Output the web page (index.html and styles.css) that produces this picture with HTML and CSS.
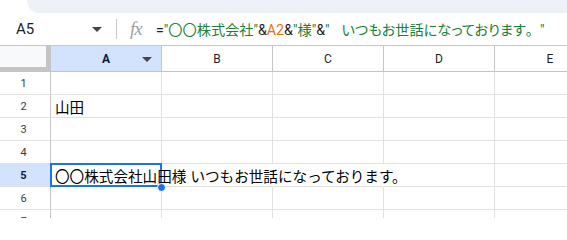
FILE: index.html
```html
<!DOCTYPE html>
<html lang="ja">
<head>
<meta charset="utf-8">
<title>Sheet</title>
<link rel="stylesheet" href="styles.css">
</head>
<body>
<div class="top"><div class="top-left"></div><div class="top-pill"></div></div>
<div class="fbar">
  <div class="namebox"><span class="name">A5</span><span class="caret"></span></div>
  <div class="sep"></div>
  <div class="fx">fx</div>
  <div class="formula"><span class="op">=</span><span class="str">"〇〇株式会社"</span><span class="op">&amp;</span><span class="ref">A2</span><span class="op">&amp;</span><span class="str">"様"</span><span class="op">&amp;</span><span class="str">"<span class="sp"> </span><span class="kana">いつもお世話になっております</span>。"</span></div>
</div>
<div class="sheet">
  <div class="corner"></div>
  <div class="ch sel">A<span class="caret small"></span></div>
  <div class="ch">B</div>
  <div class="ch">C</div>
  <div class="ch">D</div>
  <div class="ch">E</div>

  <div class="rh">1</div><div class="c"></div><div class="c"></div><div class="c"></div><div class="c"></div><div class="c"></div>
  <div class="rh">2</div><div class="c">山田</div><div class="c"></div><div class="c"></div><div class="c"></div><div class="c"></div>
  <div class="rh">3</div><div class="c"></div><div class="c"></div><div class="c"></div><div class="c"></div><div class="c"></div>
  <div class="rh">4</div><div class="c"></div><div class="c"></div><div class="c"></div><div class="c"></div><div class="c"></div>
  <div class="rh sel">5</div><div class="c active"><span class="selbox"></span><span class="val">〇〇株式会社山田様 いつもお世話になっております。</span><span class="handle"></span></div><div class="c flow"></div><div class="c flow"></div><div class="c"></div><div class="c"></div>
  <div class="rh">6</div><div class="c"></div><div class="c"></div><div class="c"></div><div class="c"></div><div class="c"></div>
  <div class="rh">7</div><div class="c"></div><div class="c"></div><div class="c"></div><div class="c"></div><div class="c"></div>
</div>
</body>
</html>
```

FILE: styles.css
```css
html, body {
  margin: 0;
  padding: 0;
  background: #fff;
  overflow: hidden;
}
body {
  width: 567px;
  height: 218px;
  font-family: Roboto, "Noto Sans CJK JP", sans-serif;
  color: #1f1f1f;
}
.top {
  display: flex;
  height: 13px;
}
.top-left {
  width: 27px;
  background: #fff;
}
.top-pill {
  flex: 1;
  background: #eef2f8;
  border-bottom-left-radius: 12px;
}
.fbar {
  display: flex;
  align-items: center;
  height: 32px;
  border-bottom: 1px solid #c7c7c7;
  box-sizing: content-box;
}
.namebox {
  width: 116px;
  display: flex;
  align-items: center;
  padding-left: 16px;
  padding-right: 14px;
  box-sizing: border-box;
}
.name {
  font-size: 15px;
  flex: 1;
  color: #1f1f1f;
}
.caret {
  width: 0;
  height: 0;
  border-left: 5px solid transparent;
  border-right: 5px solid transparent;
  border-top: 5px solid #444746;
}
.sep {
  width: 1px;
  height: 20px;
  background: #c7c7c7;
}
.fx {
  font-family: "Liberation Serif", serif;
  font-style: italic;
  font-size: 19px;
  color: #a0a0a0;
  margin-left: 13px;
  width: 26px;
  letter-spacing: -1px;
}
.formula {
  font-family: Roboto, "Noto Sans CJK JP", sans-serif;
  font-size: 14.2px;
  white-space: pre;
  color: #1f1f1f;
}
.kana {
  font-feature-settings: "palt" 1;
}
.sp {
  display: inline-block;
  width: 12px;
}
.op { color: #1f1f1f; }
.str { color: #188038; }
.ref { color: #e8710a; }
.sheet {
  display: grid;
  grid-template-columns: 51px repeat(5, 111px);
  grid-template-rows: 26px repeat(7, 23px);
  font-family: "Liberation Sans", "Noto Sans CJK JP", sans-serif;
}
.corner {
  background: #f8f9fa;
  border-right: 5px solid #c4c4c4;
  border-bottom: 5px solid #c4c4c4;
  box-sizing: border-box;
}
.ch {
  display: flex;
  align-items: center;
  justify-content: center;
  position: relative;
  font-family: Roboto, sans-serif;
  font-size: 12px;
  color: #1f1f1f;
  border-right: 1px solid #c4c4c4;
  border-bottom: 1px solid #c4c4c4;
  box-sizing: border-box;
  padding-top: 1px;
}
.ch.sel {
  background: #d3e3fd;
  font-weight: 700;
  color: #0b1b3f;
}
.caret.small {
  position: absolute;
  right: 9px;
  top: 11px;
  border-top-color: #444746;
}
.rh {
  display: flex;
  align-items: center;
  justify-content: center;
  font-family: Roboto, sans-serif;
  font-size: 11px;
  color: #3c3c3c;
  border-right: 1px solid #c4c4c4;
  border-bottom: 1px solid #e1e1e1;
  box-sizing: border-box;
  padding-right: 3px;
}
.rh.sel {
  background: #d3e3fd;
  font-weight: 700;
  color: #0b1b3f;
}
.c {
  display: flex;
  align-items: center;
  padding-left: 4px;
  padding-top: 1px;
  font-size: 14.6px;
  color: #000;
  white-space: nowrap;
  border-right: 1px solid #e1e1e1;
  border-bottom: 1px solid #e1e1e1;
  box-sizing: border-box;
  min-width: 0;
}
.c.active {
  position: relative;
  overflow: visible;
  z-index: 2;
  border-right-color: transparent;
}
.val {
  position: relative;
}
.c.flow {
  border-right-color: transparent;
}
.selbox {
  position: absolute;
  left: -1px;
  top: -1px;
  width: 112px;
  height: 24px;
  border: 2px solid #1a73e8;
  box-sizing: border-box;
}
.handle {
  position: absolute;
  left: 106px;
  top: 19px;
  width: 9px;
  height: 9px;
  border-radius: 50%;
  background: #1a73e8;
  border: 1px solid #fff;
  box-sizing: border-box;
}
```
